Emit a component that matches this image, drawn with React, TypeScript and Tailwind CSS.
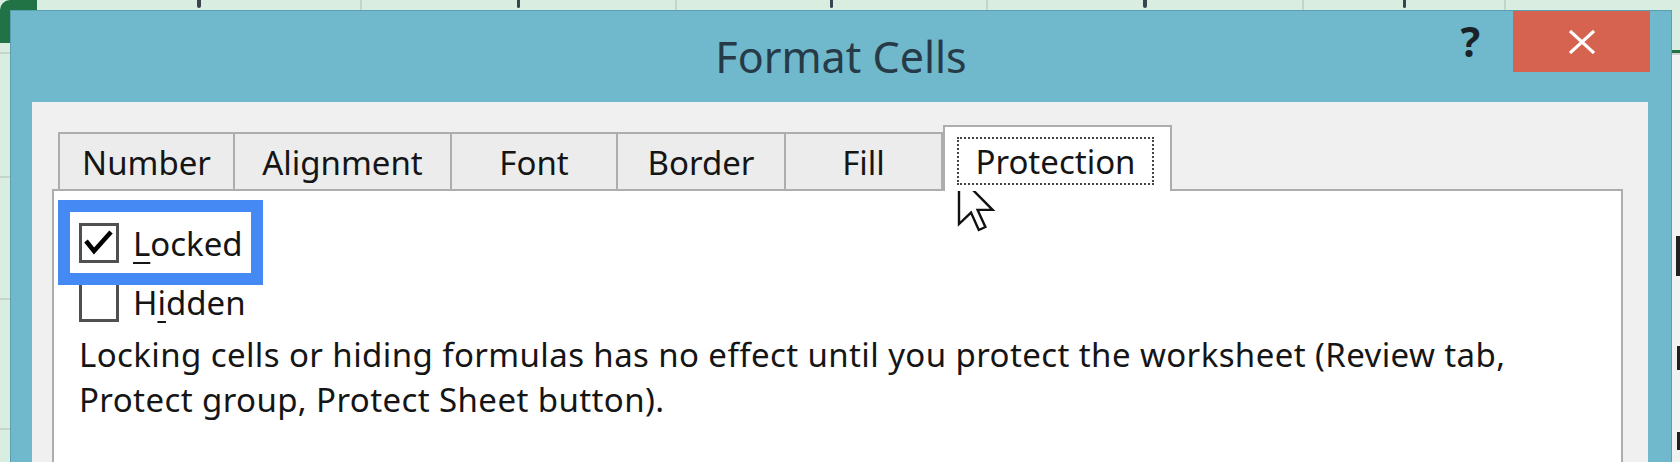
import React from "react";

function CheckBox({ checked }: { checked?: boolean }) {
  return (
    <div className="relative w-[40px] h-[40px] border-[3px] border-[#505050] bg-white shrink-0">
      {checked && (
        <svg className="absolute left-0 top-0" width="34" height="34" viewBox="0 0 34 34">
          <polyline points="4,15 12,25 29,6" fill="none" stroke="#000" strokeWidth="4.6" strokeLinecap="butt" strokeLinejoin="miter" />
        </svg>
      )}
    </div>
  );
}

function Tab({ label, w, last }: { label: string; w: string; last?: boolean }) {
  return (
    <div
      className={`${w} ${last ? "border-r-2" : ""} h-[57px] shrink-0 border-t-2 border-l-2 border-[#adadad] bg-[#ececec] flex items-center justify-center pt-[2px] text-[33px] text-[#151515]`}
    >
      {label}
    </div>
  );
}

function SheetCell({ w, mark }: { w: string; mark?: string }) {
  return (
    <div className={`${w} h-full shrink-0 border-r-2 border-[#c4d6ca] flex justify-center`}>
      {mark && <div className={`${mark} h-[8px] bg-[#3a4450] rounded-b-sm`} />}
    </div>
  );
}

export default function App() {
  return (
    <div className="relative w-[1680px] h-[462px] overflow-hidden bg-[#d9eee1] flex flex-col font-['Noto_Sans','Open_Sans',sans-serif]">
      {/* spreadsheet strip above the dialog */}
      <div className="h-[10px] shrink-0 flex">
        <div className="w-[37px] h-full shrink-0 bg-[#217346] rounded-tl-[16px]" />
        <SheetCell w="w-[325px]" mark="w-[4px]" />
        <SheetCell w="w-[315px]" mark="w-[3px]" />
        <SheetCell w="w-[311px]" mark="w-[3px]" />
        <SheetCell w="w-[316px]" mark="w-[4px]" />
        <SheetCell w="w-[202px]" mark="w-[3px]" />
        <div className="flex-1" />
      </div>

      <div className="flex flex-1 min-h-0">
        {/* left strip of the sheet */}
        <div className="w-[10px] shrink-0 flex flex-col">
          <div className="h-[33px] bg-[#217346]" />
          <div className="h-[11px] border-b-2 border-[#c4d6ca]" />
          <div className="h-[124px] border-b-2 border-[#c4d6ca]" />
          <div className="h-[122px] border-b-2 border-[#c4d6ca]" />
          <div className="h-[130px] border-b-2 border-[#c4d6ca]" />
        </div>

        {/* dialog */}
        <div className="w-[1662px] shrink-0 h-[470px] bg-[#70b8cb] border border-[#5b9fb3] flex flex-col">
          {/* title bar */}
          <div className="h-[91px] shrink-0 grid grid-cols-[1fr_auto_1fr] items-start">
            <div />
            <div className="pt-[24px] text-[43px] leading-none text-[#263a47]">Format Cells</div>
            <div className="flex justify-end items-start pr-[21px]">
              <span className="mt-[10px] mr-[33px] text-[41px] leading-none font-bold text-[#1b2329]">?</span>
              <div className="w-[137px] h-[61px] bg-[#d6634f] flex items-center justify-center">
                <svg width="26" height="24" viewBox="0 0 26 24">
                  <path d="M1 1 L25 23 M25 1 L1 23" stroke="#fff" strokeWidth="3.2" />
                </svg>
              </div>
            </div>
          </div>

          {/* client area */}
          <div className="ml-[21px] mr-[23px] flex-1 bg-[#f0f0f0] pt-[23px] pl-[20px] pr-[25px] flex flex-col">
            <div className="relative z-10 h-[64px] flex items-end pl-[6px]">
              <Tab label="Number" w="w-[175px]" />
              <Tab label="Alignment" w="w-[217px]" />
              <Tab label="Font" w="w-[166px]" />
              <Tab label="Border" w="w-[168px]" />
              <Tab label="Fill" w="w-[159px]" last />
              <div className="w-[229px] h-[66px] -mb-[2px] shrink-0 border-t-2 border-x-2 border-[#adadad] bg-white flex pt-[10px] pl-[12px] pr-[16px] pb-[6px]">
                <div className="flex-1 border-2 border-dotted border-[#444] flex items-center justify-center text-[33px] text-[#151515] pt-[2px]">
                  Protection
                </div>
              </div>
            </div>
            <div className="flex-1 bg-white border-2 border-[#adadad] pt-[32px] pl-[25px]">
              <div className="flex items-center gap-[14px] h-[40px]">
                <CheckBox checked />
                <span className="text-[33px] text-[#151515] leading-none">
                  <span className="underline decoration-2 underline-offset-[6px]">L</span>ocked
                </span>
              </div>
              <div className="flex items-center gap-[14px] h-[40px] mt-[19px]">
                <CheckBox />
                <span className="text-[33px] text-[#151515] leading-none">
                  H<span className="underline decoration-2 underline-offset-[6px]">i</span>dden
                </span>
              </div>
              <p className="mt-[10px] text-[33px] leading-[45px] tracking-[0.4px] text-[#151515]">
                Locking cells or hiding formulas has no effect until you protect the worksheet (Review tab,
                <br />
                Protect group, Protect Sheet button).
              </p>
            </div>
          </div>
        </div>

        {/* right strip of the sheet */}
        <div className="flex-1 flex flex-col">
          <div className="h-[40px] shrink-0" />
          <div className="h-[3px] shrink-0 bg-[#217346]" />
          <div className="flex-1 bg-[#f2f2f2] flex flex-col items-end">
            <div className="h-[183px] w-full border-t-2 border-[#d0d0d0]" />
            <div className="w-[4px] h-[40px] bg-[#222]" />
            <div className="h-[70px]" />
            <div className="w-[3px] h-[24px] bg-[#222]" />
            <div className="h-[62px]" />
            <div className="w-[3px] h-[18px] bg-[#222]" />
          </div>
        </div>
      </div>

      {/* annotation highlight */}
      <div className="absolute left-[58px] top-[200px] w-[205px] h-[85px] border-[12px] border-[#4489f4]" />

      {/* mouse cursor */}
      <svg className="absolute left-[956px] top-[173px]" width="42" height="63" viewBox="-1 -1 14 21">
        <path d="M0 0 L0 16 L4 12.2 L6.6 18 L8.8 17 L6.2 11.3 L11.2 11.3 Z" fill="#fff" stroke="#111" strokeWidth="0.8" strokeLinejoin="miter" />
      </svg>
    </div>
  );
}
